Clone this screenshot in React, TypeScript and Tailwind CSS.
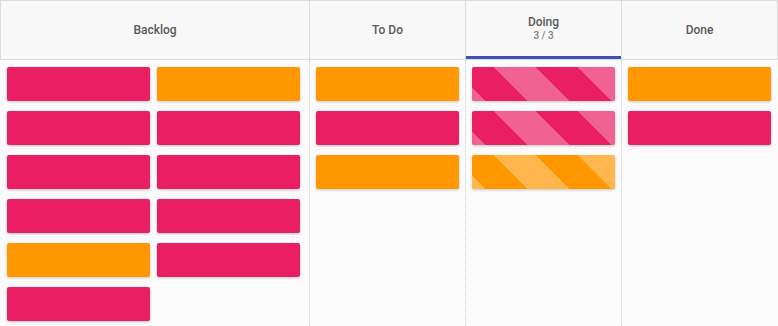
type Card = { color: "pink" | "orange" };

const columns: { title: string; sub?: string; active?: boolean; wide?: boolean; striped?: boolean; cards: Card["color"][] }[] = [
  {
    title: "Backlog",
    wide: true,
    cards: ["pink", "orange", "pink", "pink", "pink", "pink", "pink", "pink", "orange", "pink", "pink"],
  },
  { title: "To Do", cards: ["orange", "pink", "orange"] },
  { title: "Doing", sub: "3 / 3", active: true, striped: true, cards: ["pink", "pink", "orange"] },
  { title: "Done", cards: ["orange", "pink"] },
];

const stripes =
  "bg-[repeating-linear-gradient(45deg,rgba(255,255,255,0.3)_0px,rgba(255,255,255,0.3)_9.2px,transparent_9.2px,transparent_38.9px,rgba(255,255,255,0.3)_38.9px,rgba(255,255,255,0.3)_59.4px)]";

function Tile({ color, striped }: { color: Card["color"]; striped?: boolean }) {
  const base = color === "pink" ? "bg-[#e91e63]" : "bg-[#ff9800]";
  return (
    <div
      className={`w-[143px] h-[34px] rounded-[2px] shadow-[0_1px_3px_rgba(0,0,0,0.22)] ${base}`}
    >
      {striped && <div className={`w-full h-full rounded-[2px] ${stripes}`} />}
    </div>
  );
}

export default function App() {
  return (
    <div className="w-[778px] h-[326px] overflow-hidden bg-[#fbfbfb] font-['Roboto',sans-serif] flex flex-col">
      <div className="flex h-[60px] border-t border-b border-l border-[#dcdcdc] bg-[#f8f8f8]">
        {columns.map((col) => (
          <div
            key={col.title}
            className={`${col.wide ? "w-[309px]" : "w-[156px]"} ${col.sub ? "pb-[3px]" : ""} border-r border-[#dcdcdc] relative flex flex-col items-center justify-center`}
          >
            <div className="text-[12px] font-medium text-[#5a5a5a] leading-[14px]">{col.title}</div>
            {col.sub && <div className="text-[10px] font-medium text-[#808080] leading-[12px] mt-[1px]">{col.sub}</div>}
            {col.active && <div className="absolute left-0 right-0 bottom-0 h-[3px] bg-[#3f51b5]" />}
          </div>
        ))}
      </div>
      <div className="flex flex-1 pl-[1px]">
        {columns.map((col, i) => (
          <div
            key={col.title}
            className={`${col.wide ? "w-[309px]" : "w-[156px]"} ${i < columns.length - 1 ? "border-r border-dotted border-[#cfcfcf]" : ""} pl-[6px] pt-[7px]`}
          >
            <div className={`flex flex-wrap gap-y-[10px] ${col.wide ? "gap-x-[7px] pr-[8px]" : ""}`}>
              {col.cards.map((c, j) => (
                <Tile key={j} color={c} striped={col.striped} />
              ))}
            </div>
          </div>
        ))}
      </div>
    </div>
  );
}
